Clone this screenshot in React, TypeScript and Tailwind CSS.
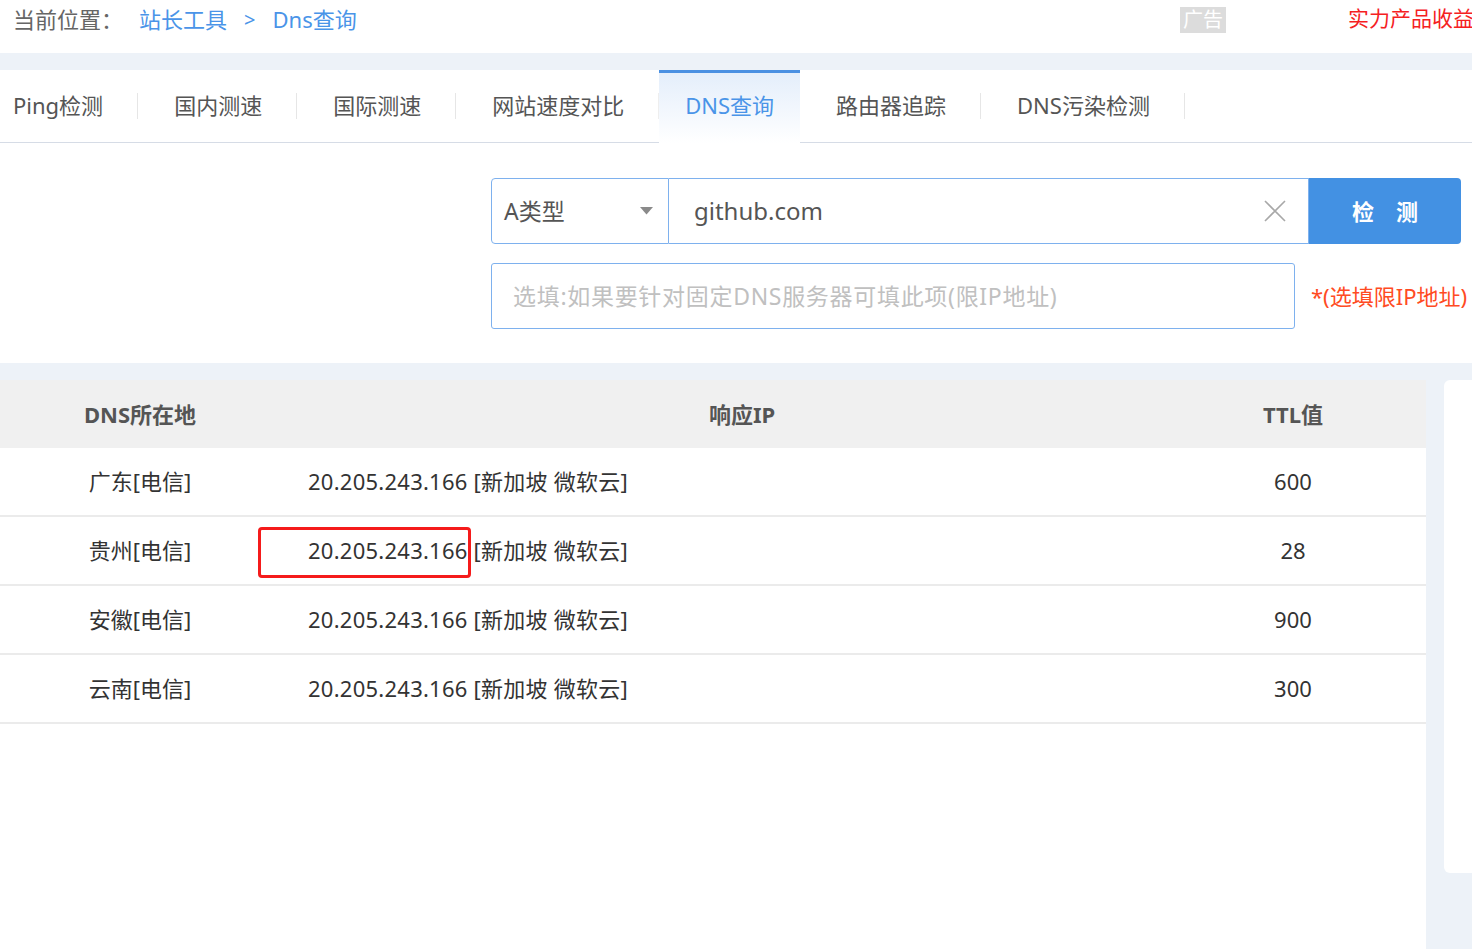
import React from 'react';

const FONT = { fontFamily: '"Noto Sans", "Noto Sans CJK SC", sans-serif' };

const tabs = ['Ping检测', '国内测速', '国际测速', '网站速度对比', 'DNS查询', '路由器追踪', 'DNS污染检测'];
const ACTIVE = 4;

const rows = [
  { loc: '广东[电信]', ip: '20.205.243.166', geo: '[新加坡 微软云]', ttl: '600' },
  { loc: '贵州[电信]', ip: '20.205.243.166', geo: '[新加坡 微软云]', ttl: '28', marked: true },
  { loc: '安徽[电信]', ip: '20.205.243.166', geo: '[新加坡 微软云]', ttl: '900' },
  { loc: '云南[电信]', ip: '20.205.243.166', geo: '[新加坡 微软云]', ttl: '300' },
];

function TopBar() {
  return (
    <div className="h-[53px] bg-white flex items-start pt-[3px] pl-[13px] overflow-hidden text-[22px] whitespace-nowrap">
      <div className="w-[1167px] shrink-0 flex items-center">
        <span className="text-[#666]">当前位置：</span>
        <span className="ml-[16px] text-[#4a94e8]">站长工具</span>
        <span className="ml-[17px] text-[#4a94e8] text-[20px]">&gt;</span>
        <span className="ml-[17px] text-[#4a94e8]">Dns查询</span>
      </div>
      <span className="mt-[4px] h-[26px] px-[3px] flex items-center bg-[#dcdcdc] text-white text-[20px] leading-none">广告</span>
      <span className="ml-[122px] text-[#f5211f] text-[21px] shrink-0">实力产品收益</span>
    </div>
  );
}

function Tabs() {
  return (
    <div className="h-[73px] flex items-stretch border-b border-[#d6dce6]">
      {tabs.map((t, i) => {
        const active = i === ACTIVE;
        const showSep = i !== ACTIVE && i !== ACTIVE - 1;
        return (
          <React.Fragment key={t}>
            {active ? (
              <div className="px-[26px] pb-[5px] flex items-center border-t-[3px] border-[#4a90e2] bg-gradient-to-b from-[#e4eefb] to-white -mb-px text-[22px] text-[#4a94e8]">
                {t}
              </div>
            ) : (
              <div className={`${i === 0 ? 'pl-[13px]' : 'pl-[36px]'} pr-[34px] pb-[2px] flex items-center text-[22px] text-[#555]`}>
                {t}
              </div>
            )}
            {showSep && (
              <div className="flex items-center">
                <div className="w-px h-[26px] bg-[#e6e6e6]" />
              </div>
            )}
            {i === ACTIVE - 1 && (
              <div className="flex items-center">
                <div className="w-px h-[26px] bg-[#eeeeee]" />
              </div>
            )}
          </React.Fragment>
        );
      })}
    </div>
  );
}

function Form() {
  return (
    <div className="pl-[491px] pt-[35px] pb-[34px] flex flex-col gap-[19px]">
      <div className="flex h-[66px]">
        <div className="w-[178px] flex items-center justify-between pl-[12px] pr-[15px] border border-[#7eb1ee] rounded-l-[4px] text-[23px] text-[#555]">
          <span>A类型</span>
          <svg width="13" height="8" viewBox="0 0 13 8">
            <path d="M0 0 L13 0 L6.5 7.5 Z" fill="#8a8a8a" />
          </svg>
        </div>
        <div className="w-[640px] flex items-center pl-[25px] pr-[22px] border border-l-0 border-[#7eb1ee] text-[24px] text-[#555]">
          <span className="flex-1">github.com</span>
          <svg width="22" height="22" viewBox="0 0 22 22">
            <path d="M1 1 L21 21 M21 1 L1 21" stroke="#a8a8a8" strokeWidth="1.6" />
          </svg>
        </div>
        <button className="w-[152px] bg-[#4391e3] text-white text-[22px] font-bold rounded-r-[4px] tracking-[22px] pl-[22px]">
          检测
        </button>
      </div>
      <div className="flex items-center h-[66px]">
        <div className="w-[804px] h-full flex items-center pl-[21px] border border-[#7eb1ee] rounded-[3px] text-[23px] text-[#c0c0c0] tracking-[0.7px]">
          选填:如果要针对固定DNS服务器可填此项(限IP地址)
        </div>
        <span className="ml-[16px] text-[22px] text-[#ff4b23] whitespace-nowrap">*(选填限IP地址)</span>
      </div>
    </div>
  );
}

function Table() {
  return (
    <div className="w-[1426px] shrink-0 bg-white h-[569px]">
      <div className="h-[68px] flex items-center bg-[#f0f0f0] text-[22px] font-bold text-[#555]">
        <div className="w-[280px] text-center">DNS所在地</div>
        <div className="flex-1 text-center pl-[44px]">响应IP</div>
        <div className="w-[266px] text-center">TTL值</div>
      </div>
      {rows.map((r) => (
        <div key={r.loc} className="relative h-[69px] flex items-center border-b-2 border-[#ebebeb] text-[22px] text-[#333]">
          <div className="w-[280px] text-center">{r.loc}</div>
          <div className="flex-1 pl-[28px] tracking-[0.25px]">
            {r.ip} {r.geo}
          </div>
          <div className="w-[266px] text-center">{r.ttl}</div>
          {r.marked && (
            <div className="absolute left-[258px] top-[10px] w-[213px] h-[51px] border-[3px] border-[#f51b1b] rounded-[4px]" />
          )}
        </div>
      ))}
    </div>
  );
}

export default function App() {
  return (
    <div className="w-full h-[949px] overflow-hidden bg-[#edf2f8]" style={FONT}>
      <TopBar />
      <div className="mt-[17px] bg-white">
        <Tabs />
        <Form />
      </div>
      <div className="mt-[17px] flex gap-[18px]">
        <Table />
        <div className="flex-1 h-[493px] bg-white rounded-l-[6px]" />
      </div>
    </div>
  );
}
